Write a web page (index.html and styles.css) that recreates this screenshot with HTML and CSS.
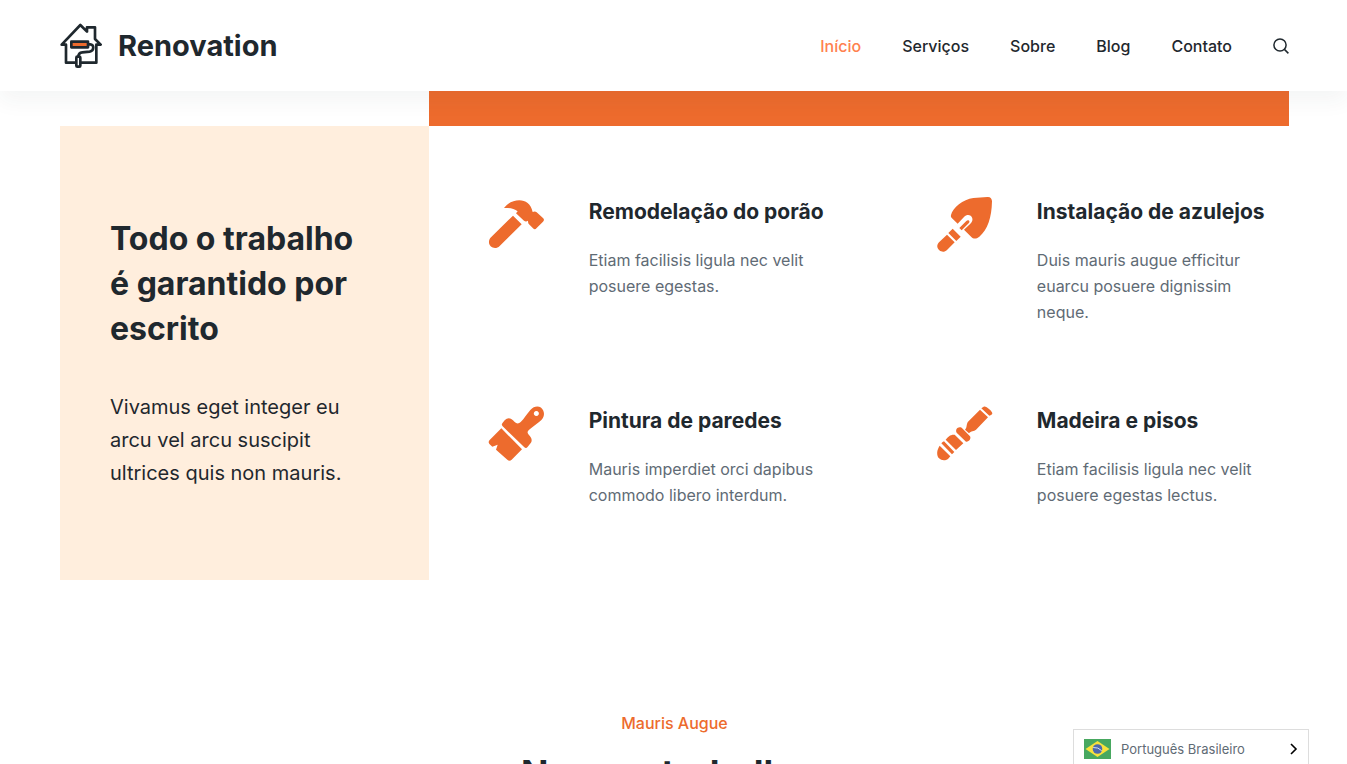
FILE: index.html
```html
<!DOCTYPE html>
<html lang="pt-BR">
<head>
    <meta charset="UTF-8">
    <meta name="viewport" content="width=device-width, initial-scale=1.0">
    <title>Renovation</title>
    <link rel="stylesheet" href="styles.css">
</head>
<body>
    <header class="site-header">
        <div class="container header-inner">
            <a href="#" class="brand">
                <svg class="brand-logo" viewBox="15 14 126 138" aria-hidden="true">
                    <g fill="none" stroke="#1f282e" stroke-width="8" stroke-linejoin="round" stroke-linecap="round">
                        <path d="M62 133H33V79H20L76 20l20 20V27h24v35l17 17h-13v54H80"/>
                        <path d="M100 78h6c12 0 12 20-2 22l-22 2c-9 1-12 5-12 13"/>
                        <rect x="49" y="70" width="50" height="17" fill="#ed6b2d"/>
                        <rect x="64" y="115" width="12" height="30" rx="3" fill="#fff"/>
                    </g>
                </svg>
                <span>Renovation</span>
            </a>
            <nav class="main-nav">
                <a href="#" class="active">Início</a>
                <a href="#">Serviços</a>
                <a href="#">Sobre</a>
                <a href="#">Blog</a>
                <a href="#">Contato</a>
                <button class="search-btn" type="button" aria-label="Pesquisar">
                    <svg viewBox="0 0 16 16" fill="none" stroke="currentColor" stroke-width="1.5">
                        <circle cx="7" cy="7" r="6.1"/>
                        <path d="M11.4 11.4l4 4"/>
                    </svg>
                </button>
            </nav>
        </div>
    </header>

    <main>
        <section class="container features">
            <div class="banner"></div>
            <div class="promise">
                <h2>Todo o trabalho é garantido por escrito</h2>
                <p>Vivamus eget integer eu arcu vel arcu suscipit ultrices quis non mauris.</p>
            </div>
            <div class="services">
                <article class="service">
                    <svg viewBox="27 18 165 165" aria-hidden="true">
                        <path d="M72 54C84 38 101 31 118 31C137 31 152 41 158 66C163 63 167 64 170 67L188 83C193 87 193 91 189 95L170 114C166 119 163 119 159 115L147 103C145 100 144 97 144 92C140 95 136 95 132 92L108 70L113 64C103 56 89 53 72 54Z"/>
                        <path d="M99 77l26 26-66 65c-8 8-19 8-27 1-7-8-7-19 1-27z"/>
                    </svg>
                    <div class="service-text">
                        <h3>Remodelação do porão</h3>
                        <p>Etiam facilisis ligula nec velit posuere egestas.</p>
                    </div>
                </article>
                <article class="service">
                    <svg viewBox="21 18 165 165" aria-hidden="true">
                        <path d="M63 75c5-22 36-47 67-51l42-3c9-1 14 5 14 13-1 49-13 86-38 106-9 7-17 8-24 1l-22-22 19-18c17-15-3-36-19-20L83 101 66 85c-3-3-4-6-3-10z"/>
                        <path d="M88 114l21-21c6-6 13 1 7 7l-21 21zM55 129l13-13 24 24-13 13zM51 134l23 23-23 23c-7 7-16 7-23 1-8-7-8-17-1-24z"/>
                    </svg>
                    <div class="service-text">
                        <h3>Instalação de azulejos</h3>
                        <p>Duis mauris augue efficitur euarcu posuere dignissim neque.</p>
                    </div>
                </article>
                <article class="service">
                    <svg viewBox="27 21 165 165" aria-hidden="true">
                        <path fill-rule="evenodd" d="M68 85c-4-4-3-7 0-11l6-7c8-8 17-8 25 0l5 5c6 6 13 5 18 0 11-11 19-24 29-36 14-16 33-13 39 2 5 13 0 24-10 32l-30 23c-9 7-9 11-3 18 11 12 10 20 1 29-4 4-8 15-15 8zM169 39a7.5 7.5 0 1 0 .1 0z"/>
                        <path d="M64 91l62 63-31 31c-4 4-9 4-13 0L48 155l5-15-16 6-8-7c-4-4-4-9 0-13z"/>
                    </svg>
                    <div class="service-text">
                        <h3>Pintura de paredes</h3>
                        <p>Mauris imperdiet orci dapibus commodo libero interdum.</p>
                    </div>
                </article>
                <article class="service">
                    <svg viewBox="21 21 165 165" aria-hidden="true">
                        <path d="M161 26C166 21 187 39 187 46C187 49 183 52 178 53L154 31ZM150 35L174 58L138 95C132 101 123 98 117 106L105 95C112 88 108 80 114 71Z"/>
                        <path d="M80 104c-5-9 3-20 15-15l25 26c4 6-2 17-12 16zM74 110l26 26-22 20-31-31c8-9 13-16 27-15zM42 130l31 32-7 7-32-33c3-3 5-5 8-6zM29 143l32 32-7 8c-8 6-20 5-27-2-8-9-7-25 2-38z"/>
                    </svg>
                    <div class="service-text">
                        <h3>Madeira e pisos</h3>
                        <p>Etiam facilisis ligula nec velit posuere egestas lectus.</p>
                    </div>
                </article>
            </div>
        </section>

        <section class="container projects">
            <p class="eyebrow">Mauris Augue</p>
            <h2>Nossos trabalhos</h2>
        </section>
    </main>

    <div class="language-switcher">
        <svg class="flag" viewBox="0 0 27 20" aria-hidden="true">
            <rect width="27" height="20" fill="#48a860"/>
            <path d="M13.5 2L25.5 10l-12 8-12-8z" fill="#f8e13c"/>
            <circle cx="13.5" cy="10" r="4.8" fill="#4d68ae"/>
            <path d="M9.2 8.5q5-.5 8.500 3.200" fill="none" stroke="#d5dfef"/>
        </svg>
        <select id="language" aria-label="Idioma">
            <option>Português Brasileiro</option>
        </select>
        <svg class="chevron" viewBox="0 0 8 12" fill="none" stroke="#000" stroke-width="1.6" aria-hidden="true">
            <path d="M1 1l5 5-5 5"/>
        </svg>
    </div>
</body>
</html>
```
FILE: styles.css
```css
* {
    margin: 0;
    padding: 0;
    box-sizing: border-box;
}

body {
    font-family: Inter, "Open Sans", sans-serif;
    font-size: 16px;
    line-height: 26px;
    color: #5f6b75;
    background: #fff;
}

h2,
h3 {
    color: #1f282e;
}

a {
    color: inherit;
    text-decoration: none;
}

.container {
    width: 100%;
    max-width: 1348px;
    margin: 0 auto;
    padding: 0 58px 0 60px;
}

.site-header {
    position: sticky;
    top: 0;
    z-index: 10;
    background: #fff;
    box-shadow: 0 10px 20px rgba(41, 51, 61, 0.05);
}

.header-inner {
    display: flex;
    align-items: center;
    justify-content: space-between;
    min-height: 91px;
}

.brand {
    display: flex;
    align-items: center;
    gap: 16px;
    font-size: 29px;
    font-weight: 700;
    color: #1f282e;
}

.brand-logo {
    width: 42px;
    height: 46px;
}

.main-nav {
    display: flex;
    align-items: center;
    gap: 41px;
    font-weight: 500;
    color: #1f282e;
}

.main-nav .active {
    color: #ff8150;
}

.search-btn {
    display: flex;
    border: none;
    background: none;
    color: #1f282e;
    cursor: pointer;
}

.search-btn svg {
    width: 16px;
    height: 16px;
}

.features {
    display: grid;
    grid-template-columns: 3fr 7fr;
}

.banner {
    grid-column: 2;
    height: 35px;
    background: #ed6b2d;
}

.promise {
    grid-column: 1;
    padding: 90px 50px;
    background: #ffeedd;
}

.promise h2 {
    font-size: 32px;
    line-height: 45px;
    margin-bottom: 40px;
}

.promise p {
    font-size: 20px;
    line-height: 33px;
    color: #1f282e;
}

.services {
    display: grid;
    grid-template-columns: 1fr 1fr;
    align-content: start;
    gap: 80px 96px;
    padding: 70px 0 0 60px;
}

.service {
    display: flex;
    gap: 45px;
}

.service svg {
    flex: none;
    width: 55px;
    height: 55px;
    fill: #ed6b2d;
    overflow: visible;
}

.service h3 {
    font-size: 21px;
    line-height: 32px;
    margin-bottom: 19px;
}

.service p {
    max-width: 240px;
}

.projects {
    padding-top: 130px;
    text-align: center;
}

.eyebrow {
    font-weight: 500;
    color: #ed6b2d;
}

.projects h2 {
    margin-top: 12px;
    font-size: 36px;
    line-height: 50px;
}

.language-switcher {
    position: fixed;
    right: 38px;
    bottom: -5px;
    z-index: 20;
    display: flex;
    align-items: center;
    gap: 10px;
    width: 236px;
    height: 40px;
    padding: 0 10px;
    border: 1px solid #ddd;
    background: #fff;
}

.flag {
    width: 27px;
    height: 20px;
}

.language-switcher select {
    flex: 1;
    appearance: none;
    border: none;
    background: none;
    font: inherit;
    font-size: 13px;
    color: inherit;
}

.chevron {
    width: 8px;
    height: 12px;
}

@media (max-width: 900px) {
    .features,
    .services {
        grid-template-columns: 1fr;
    }

    .banner,
    .promise {
        grid-column: 1;
    }

    .services {
        padding-left: 0;
    }

    .header-inner,
    .main-nav {
        flex-wrap: wrap;
    }
}
```
